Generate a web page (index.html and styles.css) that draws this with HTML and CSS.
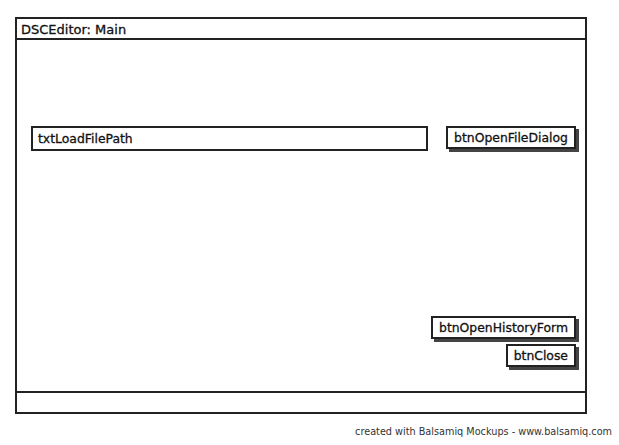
FILE: index.html
```html
<!DOCTYPE html>
<html lang="en">
<head>
  <meta charset="UTF-8">
  <title>DSCEditor: Main</title>
  <link rel="stylesheet" href="styles.css">
</head>
<body>

<div class="window">
  <div class="title-bar">DSCEditor: Main</div>
  <div class="content">
    <div class="file-row">
      <div class="text-field">txtLoadFilePath</div>
      <div class="button">btnOpenFileDialog</div>
    </div>
    <div class="bottom-buttons">
      <div class="button">btnOpenHistoryForm</div>
      <div class="button">btnClose</div>
    </div>
  </div>
  <div class="status-bar"></div>
</div>

<div class="footer">created with Balsamiq Mockups - www.balsamiq.com</div>

</body>
</html>
```

FILE: styles.css
```css
body {
  margin: 0;
  padding: 17px 0 0 15px;
  background-color: #fff;
  color: #111;
  font-family: 'DejaVu Sans', sans-serif;
}

.window {
  width: 572px;
  height: 397px;
  box-sizing: border-box;
  border: 2px solid #222;
  display: flex;
  flex-direction: column;
}

.title-bar {
  height: 19px;
  border-bottom: 2px solid #222;
  padding-left: 4px;
  font-size: 13px;
  line-height: 22px;
  -webkit-text-stroke: 0.3px #111;
}

.content {
  flex: 1;
  display: flex;
  flex-direction: column;
  justify-content: space-between;
  padding: 86px 7px 24px 14px;
}

.file-row {
  display: flex;
  align-items: flex-start;
  justify-content: space-between;
}

.text-field {
  width: 397px;
  height: 25px;
  box-sizing: border-box;
  border: 2px solid #222;
  padding-left: 5px;
  font-size: 12.4px;
  line-height: 21px;
  -webkit-text-stroke: 0.3px #111;
}

.button {
  height: 23px;
  box-sizing: border-box;
  border: 2px solid #222;
  padding: 0 6px;
  font-size: 12.4px;
  line-height: 19px;
  background-color: #fff;
  box-shadow: 3px 3px 0 #444;
  -webkit-text-stroke: 0.3px #111;
}

.file-row .button {
  width: 130px;
  padding: 0;
  margin-right: 2px;
  text-align: center;
}

.bottom-buttons {
  display: flex;
  flex-direction: column;
  align-items: flex-end;
  gap: 5px;
  padding-right: 2px;
}

.status-bar {
  height: 19px;
  border-top: 2px solid #222;
}

.footer {
  width: 597px;
  margin-top: 12px;
  text-align: right;
  font-size: 9.7px;
  color: #333;
}
```
